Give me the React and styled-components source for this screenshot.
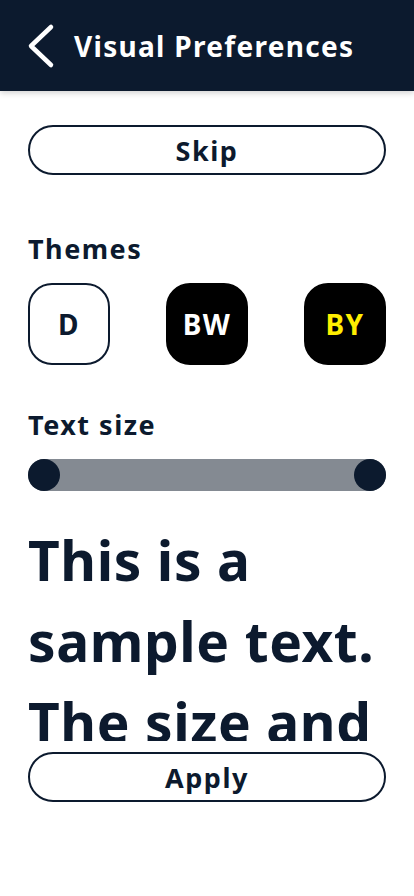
import React, { useState } from "react";
import styled, { createGlobalStyle } from "styled-components";

const GlobalStyle = createGlobalStyle`
  * { box-sizing: border-box; }
  body {
    margin: 0;
    background: #ffffff;
    font-family: "Noto Sans", "Open Sans", sans-serif;
    color: #0c1a2e;
  }
`;

const Page = styled.div`
  width: 100%;
  height: 100vh;
  display: flex;
  flex-direction: column;
  background: #ffffff;
`;

const Header = styled.header`
  height: 91px;
  background-color: #0c1a2e;
  display: flex;
  align-items: center;
  padding: 0 0 0 26px;
  gap: 18px;
  box-shadow: 0 2px 6px rgba(0, 0, 0, 0.18);
`;

const BackBtn = styled.button`
  background: none;
  border: none;
  padding: 0;
  display: flex;
  cursor: pointer;
`;

const Title = styled.h1`
  margin: 0;
  color: #ffffff;
  font-size: 28px;
  font-weight: 700;
  letter-spacing: 1.3px;
`;

const Content = styled.main`
  flex: 1;
  padding: 34px 28px 0;
  display: flex;
  flex-direction: column;
`;

const PillButton = styled.button`
  width: 100%;
  height: 50px;
  flex-shrink: 0;
  border: 2px solid #0c1a2e;
  border-radius: 25px;
  background: #ffffff;
  color: #0c1a2e;
  font-family: inherit;
  font-size: 27px;
  font-weight: 700;
  letter-spacing: 1.5px;
  line-height: 1;
  cursor: pointer;
  margin-top: ${(p) => p.$top || 0}px;
`;

const Label = styled.h2`
  margin: ${(p) => p.$top}px 0 0;
  font-size: 27px;
  font-weight: 700;
  letter-spacing: 1.5px;
  line-height: 36px;
`;

const ThemeRow = styled.div`
  display: flex;
  justify-content: space-between;
  margin-top: 16px;
`;

const ThemeBtn = styled.button`
  width: 82px;
  height: 82px;
  border-radius: 24px;
  border: 2px solid ${(p) => (p.$bg === "#ffffff" ? "#0c1a2e" : p.$bg)};
  background: ${(p) => p.$bg};
  color: ${(p) => p.$fg};
  font-family: inherit;
  font-size: 28px;
  font-weight: 700;
  letter-spacing: 1.5px;
  cursor: pointer;
`;

const Track = styled.div`
  position: relative;
  height: 32px;
  border-radius: 16px;
  background: #848a92;
  margin-top: 16px;
`;

const Thumb = styled.div`
  position: absolute;
  top: 0;
  ${(p) => (p.$right ? "right: 0;" : "left: 0;")}
  width: 32px;
  height: 32px;
  border-radius: 50%;
  background: #0c1a2e;
`;

const Preview = styled.div`
  margin-top: 28px;
  height: 222px;
  flex-shrink: 0;
  overflow: hidden;
  font-size: 55px;
  font-weight: 700;
  line-height: 81px;
  letter-spacing: 0.6px;
`;

const themes = [
  { id: "D", bg: "#ffffff", fg: "#0c1a2e" },
  { id: "BW", bg: "#000000", fg: "#ffffff" },
  { id: "BY", bg: "#000000", fg: "#ffee00" },
];

function App() {
  const [theme, setTheme] = useState("D");

  return (
    <Page>
      <GlobalStyle />
      <Header>
        <BackBtn aria-label="Back">
          <svg width="30" height="46" viewBox="0 0 30 46">
            <polyline
              points="25,4 5,23 25,42"
              fill="none"
              stroke="#ffffff"
              strokeWidth="4.5"
              strokeLinecap="round"
              strokeLinejoin="round"
            />
          </svg>
        </BackBtn>
        <Title>Visual Preferences</Title>
      </Header>
      <Content>
        <PillButton>Skip</PillButton>
        <Label $top={56}>Themes</Label>
        <ThemeRow>
          {themes.map((t) => (
            <ThemeBtn
              key={t.id}
              $bg={t.bg}
              $fg={t.fg}
              onClick={() => setTheme(t.id)}
              aria-pressed={theme === t.id}
            >
              {t.id}
            </ThemeBtn>
          ))}
        </ThemeRow>
        <Label $top={42}>Text size</Label>
        <Track>
          <Thumb />
          <Thumb $right />
        </Track>
        <Preview>
          This is a sample text. The size and style of this text will change
          according to your preferences.
        </Preview>
        <PillButton $top={11}>Apply</PillButton>
      </Content>
    </Page>
  );
}

export default App;
